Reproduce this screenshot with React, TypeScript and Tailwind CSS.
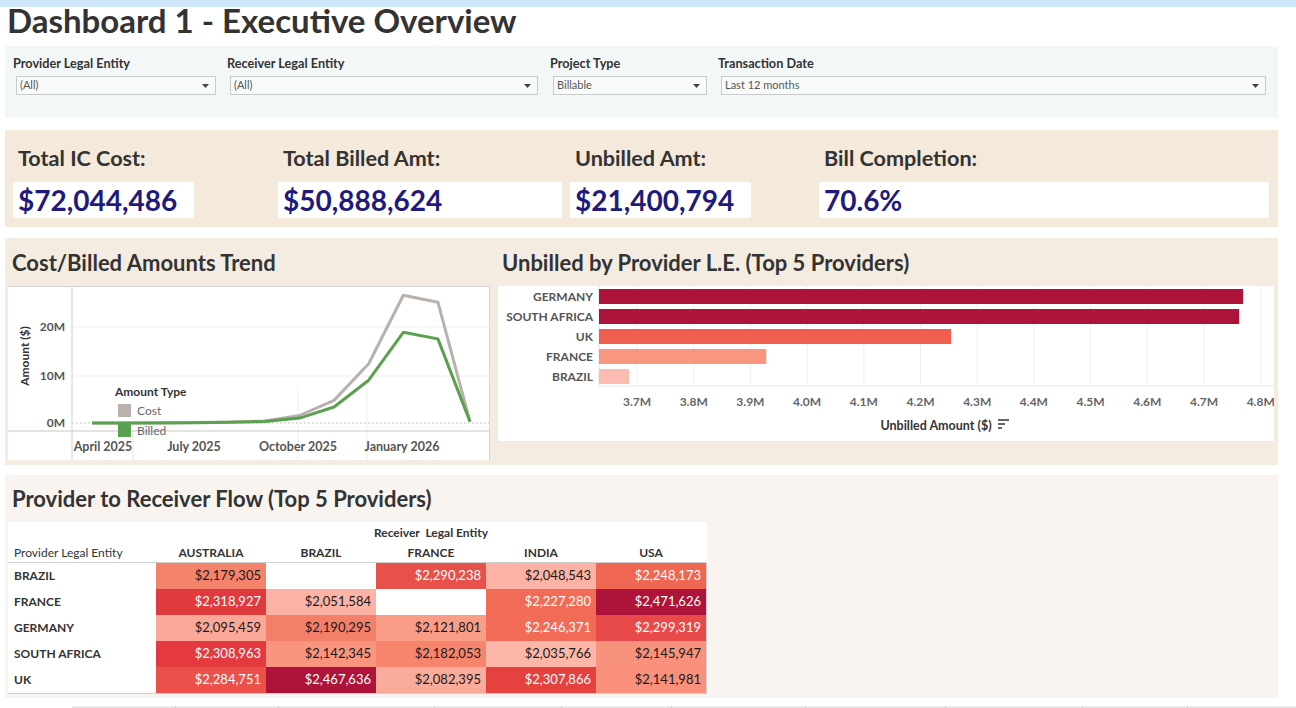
import React from "react";

type Cell = { v: string; bg: string; fg: string } | null;

const filters = [
  { label: "Provider Legal Entity", value: "(All)", col: "w-[214px]", box: "w-[200px]" },
  { label: "Receiver Legal Entity", value: "(All)", col: "w-[323px]", box: "w-[308px]" },
  { label: "Project Type", value: "Billable", col: "w-[168px]", box: "w-[154px]" },
  { label: "Transaction Date", value: "Last 12 months", col: "w-[552px]", box: "w-[545px]" },
];

const kpis = [
  { label: "Total IC Cost:", value: "$72,044,486", col: "w-[265px]", box: "w-[181px]" },
  { label: "Total Billed Amt:", value: "$50,888,624", col: "w-[292px]", box: "w-[284px]" },
  { label: "Unbilled Amt:", value: "$21,400,794", col: "w-[249px]", box: "w-[181px]" },
  { label: "Bill Completion:", value: "70.6%", col: "w-[452px]", box: "w-[450px]" },
];

// monthly x positions (page coords) and values in $M
const monthX = [92, 126.6, 161.2, 195.8, 230.3, 264.9, 299.5, 334, 368.7, 403.3, 437.9, 470];
const cost = [0, 0, 0.05, 0.1, 0.2, 0.45, 1.6, 4.8, 12.6, 27.2, 25.7, 0.3];
const billed = [0, 0, 0.03, 0.07, 0.15, 0.35, 1.05, 3.4, 9.1, 19.3, 17.9, 0.3];

const pts = (vals: number[]) =>
  vals.map((v, i) => `${(monthX[i] - 8).toFixed(1)},${(136 - v * 4.7).toFixed(1)}`).join(" ");

const bars = [
  { name: "GERMANY", v: 4.769, color: "#ae1439" },
  { name: "SOUTH AFRICA", v: 4.762, color: "#ae1439" },
  { name: "UK", v: 4.254, color: "#f05e50" },
  { name: "FRANCE", v: 3.928, color: "#fa9580" },
  { name: "BRAZIL", v: 3.686, color: "#fcbcb1" },
];
const bx = (v: number) => 139 + (v - 3.7) * 567;
const ticks = ["3.7M", "3.8M", "3.9M", "4.0M", "4.1M", "4.2M", "4.3M", "4.4M", "4.5M", "4.6M", "4.7M", "4.8M"];

const W = "text-white";
const K = "text-[#1a1a1a]";
const receivers = ["AUSTRALIA", "BRAZIL", "FRANCE", "INDIA", "USA"];
const flows: { name: string; cells: Cell[] }[] = [
  {
    name: "BRAZIL",
    cells: [
      { v: "$2,179,305", bg: "bg-[#f5836b]", fg: K },
      null,
      { v: "$2,290,238", bg: "bg-[#e8504a]", fg: W },
      { v: "$2,048,543", bg: "bg-[#fcb3a5]", fg: K },
      { v: "$2,248,173", bg: "bg-[#ef6652]", fg: W },
    ],
  },
  {
    name: "FRANCE",
    cells: [
      { v: "$2,318,927", bg: "bg-[#e0393e]", fg: W },
      { v: "$2,051,584", bg: "bg-[#fcb3a5]", fg: K },
      null,
      { v: "$2,227,280", bg: "bg-[#f26b56]", fg: W },
      { v: "$2,471,626", bg: "bg-[#ae1439]", fg: W },
    ],
  },
  {
    name: "GERMANY",
    cells: [
      { v: "$2,095,459", bg: "bg-[#fca898]", fg: K },
      { v: "$2,190,295", bg: "bg-[#f47f69]", fg: K },
      { v: "$2,121,801", bg: "bg-[#fa9d87]", fg: K },
      { v: "$2,246,371", bg: "bg-[#f26b57]", fg: W },
      { v: "$2,299,319", bg: "bg-[#e8494a]", fg: W },
    ],
  },
  {
    name: "SOUTH AFRICA",
    cells: [
      { v: "$2,308,963", bg: "bg-[#e3393f]", fg: W },
      { v: "$2,142,345", bg: "bg-[#f9957f]", fg: K },
      { v: "$2,182,053", bg: "bg-[#f7846c]", fg: K },
      { v: "$2,035,766", bg: "bg-[#fcb7a8]", fg: K },
      { v: "$2,145,947", bg: "bg-[#f9927c]", fg: K },
    ],
  },
  {
    name: "UK",
    cells: [
      { v: "$2,284,751", bg: "bg-[#eb514a]", fg: W },
      { v: "$2,467,636", bg: "bg-[#ae1439]", fg: W },
      { v: "$2,082,395", bg: "bg-[#fbab9a]", fg: K },
      { v: "$2,307,866", bg: "bg-[#e5423f]", fg: W },
      { v: "$2,141,981", bg: "bg-[#f9907b]", fg: K },
    ],
  },
];

function Dropdown({ value, box }: { value: string; box: string }) {
  return (
    <div
      className={`${box} ml-[3px] h-[19px] border border-[#c8cbcb] bg-[#f9fbfb] flex items-center justify-between pl-[3px] pr-[6px] text-[11px] text-[#555]`}
    >
      <span>{value}</span>
      <svg width="7" height="4" viewBox="0 0 7 4">
        <path d="M0 0 H7 L3.5 4 Z" fill="#444" />
      </svg>
    </div>
  );
}

function TrendChart() {
  return (
    <div className="w-[482px] h-[174px] bg-white border-t border-r border-[#d6d6d6]">
      <svg width="481" height="173" viewBox="0 0 481 173" className="block">
        {/* gridlines */}
        <line x1="64" x2="481" y1="40" y2="40" stroke="#efefef" />
        <line x1="64" x2="481" y1="89" y2="89" stroke="#efefef" />
        <line x1="64" x2="481" y1="136" y2="136" stroke="#b5b5b5" strokeDasharray="1.5 2.5" />
        {/* quarter dividers */}
        <line x1="125" x2="125" y1="144" y2="173" stroke="#e6e6e6" />
        <line x1="290" x2="290" y1="100" y2="173" stroke="#eeeeee" />
        <line x1="359" x2="359" y1="100" y2="173" stroke="#eeeeee" />
        {/* axes */}
        <line x1="64" x2="64" y1="0" y2="173" stroke="#d0d0d0" />
        <line x1="0" x2="481" y1="144" y2="144" stroke="#c8c8c8" />
        {/* y labels */}
        <g fontSize="12" fontWeight="700" fill="#555" textAnchor="end">
          <text x="57" y="44">20M</text>
          <text x="57" y="93">10M</text>
          <text x="57" y="140">0M</text>
        </g>
        <text
          x="0"
          y="0"
          fontSize="12"
          fontWeight="700"
          fill="#333"
          textAnchor="middle"
          transform="translate(21 69) rotate(-90)"
        >
          Amount ($)
        </text>
        {/* x labels */}
        <g fontSize="12.5" fontWeight="700" fill="#555" textAnchor="middle">
          <text x="95" y="164">April 2025</text>
          <text x="186" y="164">July 2025</text>
          <text x="290" y="164">October 2025</text>
          <text x="394" y="164">January 2026</text>
        </g>
        {/* series */}
        <polyline points={pts(cost)} fill="none" stroke="#bab0ac" strokeWidth="3" strokeLinejoin="round" />
        <polyline points={pts(billed)} fill="none" stroke="#59a14f" strokeWidth="3" strokeLinejoin="round" />
        {/* legend */}
        <text x="107" y="109" fontSize="12" fontWeight="700" fill="#333">
          Amount Type
        </text>
        <rect x="110" y="117" width="13" height="13" fill="#bab0ac" />
        <rect x="110" y="137" width="13" height="13" fill="#59a14f" />
        <g fontSize="12" fill="#666">
          <text x="129" y="128">Cost</text>
          <text x="129" y="148">Billed</text>
        </g>
      </svg>
    </div>
  );
}

function UnbilledChart() {
  return (
    <div className="w-[776px] h-[155px] bg-white">
      <svg width="776" height="155" viewBox="0 0 776 155" className="block">
        {ticks.map((t, i) => (
          <line key={t} x1={139 + i * 56.7} x2={139 + i * 56.7} y1="0" y2="100" stroke="#efefef" />
        ))}
        <line x1="101" x2="101" y1="0" y2="100" stroke="#e4e4e4" />
        <line x1="101" x2="776" y1="100" y2="100" stroke="#e4e4e4" />
        {bars.map((b, i) => (
          <g key={b.name}>
            <rect x="101" y={3 + i * 20} width={bx(b.v) - 101} height="15" fill={b.color} />
            <text
              x="95"
              y={15 + i * 20}
              fontSize="12"
              fontWeight="700"
              fill="#555"
              textAnchor="end"
            >
              {b.name}
            </text>
          </g>
        ))}
        <g fontSize="12" fontWeight="700" fill="#666" textAnchor="middle">
          {ticks.map((t, i) => (
            <text key={t} x={139 + i * 56.7} y="120">
              {t}
            </text>
          ))}
        </g>
        <text x="438" y="144" fontSize="12.5" fontWeight="700" fill="#333" textAnchor="middle">
          Unbilled Amount ($)
        </text>
        <g stroke="#555" strokeWidth="1.8">
          <line x1="500" x2="511" y1="134" y2="134" />
          <line x1="500" x2="507" y1="138" y2="138" />
          <line x1="500" x2="504" y1="142" y2="142" />
        </g>
      </svg>
    </div>
  );
}

function FlowTable() {
  return (
    <div className="w-[699px] bg-white text-[12px] text-[#333]">
      <div className="h-[22px] flex items-center">
        <div className="w-[148px]" />
        <div className="w-[550px] text-center font-bold whitespace-pre">Receiver  Legal Entity</div>
      </div>
      <div className="h-[19px] flex items-center border-b border-[#cfcfcf]">
        <div className="w-[148px] pl-[6px]">Provider Legal Entity</div>
        {receivers.map((r) => (
          <div key={r} className="w-[110px] text-center font-bold">
            {r}
          </div>
        ))}
      </div>
      <div className="border-b border-r border-[#cfcfcf]">
        {flows.map((row) => (
          <div key={row.name} className="h-[26px] flex">
            <div className="w-[148px] pl-[6px] flex items-center font-bold">{row.name}</div>
            {row.cells.map((c, j) => (
              <div
                key={j}
                className={`w-[110px] flex items-center justify-end pr-[5px] text-[13px] ${
                  c ? `${c.bg} ${c.fg}` : "bg-white"
                }`}
              >
                {c ? c.v : ""}
              </div>
            ))}
          </div>
        ))}
      </div>
    </div>
  );
}

export default function App() {
  return (
    <div className="w-[1296px] h-[708px] overflow-hidden bg-white flex flex-col font-['Lato',sans-serif] text-[#333]">
      <div className="h-[7px] bg-[#d0e8fb] shrink-0" />
      <div className="h-[39px] shrink-0 flex items-center pl-[7px]">
        <h1 className="text-[33px] font-bold leading-none text-[#333] -mt-[12px]">
          Dashboard 1 - Executive Overview
        </h1>
      </div>

      {/* filters */}
      <div className="ml-[5px] w-[1273px] h-[72px] shrink-0 bg-[#f3f7f7] flex pl-[8px] pt-[10px]">
        {filters.map((f) => (
          <div key={f.label} className={`${f.col} flex flex-col`}>
            <div className="text-[12.7px] font-bold text-[#333] h-[15px] leading-[15px]">{f.label}</div>
            <div className="mt-[5px]">
              <Dropdown value={f.value} box={f.box} />
            </div>
          </div>
        ))}
      </div>

      {/* headline numbers */}
      <div className="mt-[12px] ml-[5px] w-[1273px] h-[97px] shrink-0 bg-[#f5e9db] flex pl-[8px] pt-[16px]">
        {kpis.map((k) => (
          <div key={k.label} className={`${k.col} flex flex-col`}>
            <div className="pl-[5px] h-[24px] leading-[24px] text-[21.6px] font-bold text-[#333]">{k.label}</div>
            <div
              className={`${k.box} mt-[12px] h-[36px] bg-white flex items-center pl-[5px] text-[28px] font-bold text-[#1f1b7d]`}
            >
              {k.value}
            </div>
          </div>
        ))}
      </div>

      {/* charts */}
      <div className="mt-[11px] ml-[5px] w-[1273px] h-[227px] shrink-0 bg-[#f5ece1] flex pl-[3px] gap-[8px]">
        <div className="flex flex-col">
          <div className="h-[48px] flex items-center pl-[4px] text-[22px] font-bold text-[#333]">
            Cost/Billed Amounts Trend
          </div>
          <TrendChart />
        </div>
        <div className="flex flex-col">
          <div className="h-[48px] flex items-center pl-[4px] text-[22px] font-bold text-[#333]">
            Unbilled by Provider L.E. (Top 5 Providers)
          </div>
          <UnbilledChart />
        </div>
      </div>

      {/* flow matrix */}
      <div className="mt-[10px] ml-[5px] w-[1273px] h-[223px] shrink-0 bg-[#f9f4f0] flex flex-col pl-[3px]">
        <div className="h-[47px] flex items-center pl-[4px] text-[22px] font-bold text-[#333]">
          Provider to Receiver Flow (Top 5 Providers)
        </div>
        <FlowTable />
      </div>

      {/* sheet tabs strip */}
      <div className="mt-[8px] ml-[72px] h-[2px] flex bg-[#e8e8e8] shrink-0">
        <div className="w-[104px] border-r border-[#cfcfcf]" />
        <div className="w-[103px] border-r border-[#cfcfcf]" />
        <div className="w-[156px] border-r border-[#cfcfcf]" />
        <div className="w-[127px] border-r border-[#cfcfcf]" />
        <div className="w-[110px] border-r border-[#cfcfcf]" />
        <div className="w-[134px] border-r border-[#cfcfcf]" />
        <div className="w-[140px] border-r border-[#cfcfcf]" />
        <div className="w-[137px] border-r border-[#cfcfcf]" />
        <div className="w-[105px] border-r border-[#cfcfcf]" />
      </div>
    </div>
  );
}
